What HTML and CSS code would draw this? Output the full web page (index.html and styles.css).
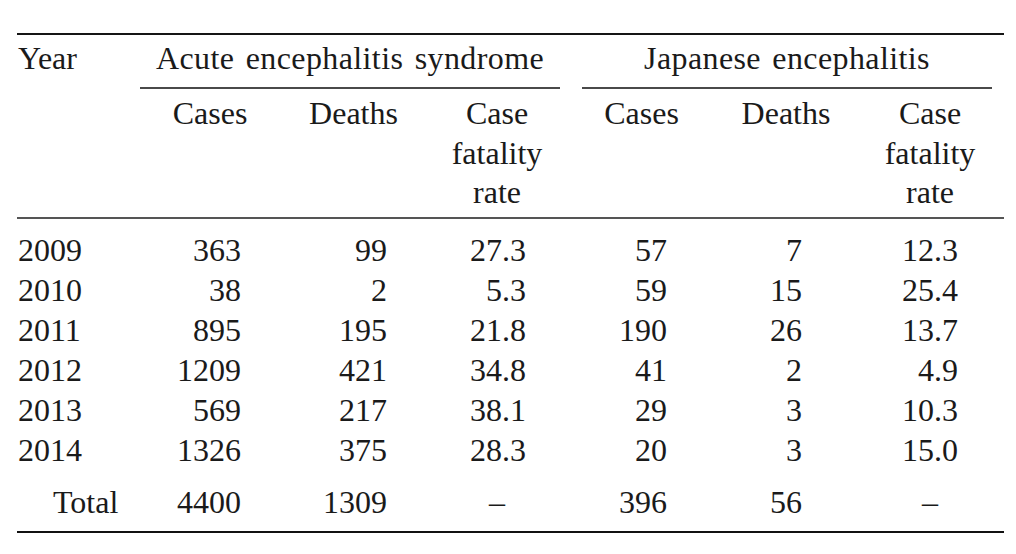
FILE: index.html
```html
<!DOCTYPE html>
<html lang="en">
<head>
<meta charset="utf-8">
<title>Acute encephalitis syndrome and Japanese encephalitis</title>
<link rel="stylesheet" href="styles.css">
</head>
<body>
<table class="je-table">
  <colgroup>
    <col class="c-year">
    <col class="c-cases1">
    <col class="c-deaths1">
    <col class="c-cfr1">
    <col class="c-cases2">
    <col class="c-deaths2">
    <col class="c-cfr2">
  </colgroup>
  <thead>
    <tr class="head-top">
      <th class="year-head" rowspan="2">Year</th>
      <th class="group group-aes" colspan="3"><div class="group-label">Acute encephalitis syndrome</div></th>
      <th class="group group-je" colspan="3"><div class="group-label">Japanese encephalitis</div></th>
    </tr>
    <tr class="head-sub">
      <th>Cases</th>
      <th>Deaths</th>
      <th>Case<br>fatality<br>rate</th>
      <th>Cases</th>
      <th>Deaths</th>
      <th>Case<br>fatality<br>rate</th>
    </tr>
  </thead>
  <tbody>
    <tr><td class="yr">2009</td><td class="n1">363</td><td class="n2">99</td><td class="n3">27.3</td><td class="n4">57</td><td class="n5">7</td><td class="n6">12.3</td></tr>
    <tr><td class="yr">2010</td><td class="n1">38</td><td class="n2">2</td><td class="n3">5.3</td><td class="n4">59</td><td class="n5">15</td><td class="n6">25.4</td></tr>
    <tr><td class="yr">2011</td><td class="n1">895</td><td class="n2">195</td><td class="n3">21.8</td><td class="n4">190</td><td class="n5">26</td><td class="n6">13.7</td></tr>
    <tr><td class="yr">2012</td><td class="n1">1209</td><td class="n2">421</td><td class="n3">34.8</td><td class="n4">41</td><td class="n5">2</td><td class="n6">4.9</td></tr>
    <tr><td class="yr">2013</td><td class="n1">569</td><td class="n2">217</td><td class="n3">38.1</td><td class="n4">29</td><td class="n5">3</td><td class="n6">10.3</td></tr>
    <tr><td class="yr">2014</td><td class="n1">1326</td><td class="n2">375</td><td class="n3">28.3</td><td class="n4">20</td><td class="n5">3</td><td class="n6">15.0</td></tr>
    <tr class="total-row"><td class="yr total-label">Total</td><td class="n1">4400</td><td class="n2">1309</td><td class="dash">–</td><td class="n4">396</td><td class="n5">56</td><td class="dash">–</td></tr>
  </tbody>
</table>
</body>
</html>
```

FILE: styles.css
```css
html, body {
  margin: 0;
  padding: 0;
  background: #ffffff;
}

body {
  padding: 33px 0 0 17px;
}

.je-table {
  border-collapse: separate;
  border-spacing: 0;
  table-layout: fixed;
  width: 987px;
  font-family: "Liberation Serif", "Times New Roman", serif;
  font-size: 32px;
  line-height: 40px;
  color: #1a1a1a;
}

.c-year { width: 123px; }
.c-cases1 { width: 140px; }
.c-deaths1 { width: 147px; }
.c-cfr1 { width: 140px; }
.c-cases2 { width: 149px; }
.c-deaths2 { width: 140px; }
.c-cfr2 { width: 148px; }

.je-table th,
.je-table td {
  padding: 0;
  font-weight: normal;
  white-space: nowrap;
}

.je-table .head-top th {
  border-top: 2px solid #151515;
  padding-top: 3px;
  vertical-align: top;
}

.je-table th.year-head {
  text-align: left;
  padding-left: 1px;
  border-bottom: 2px solid #555555;
}

.group {
  text-align: center;
}

.group-label {
  padding-bottom: 9px;
  border-bottom: 2px solid #4a4a4a;
  letter-spacing: 0.4px;
  word-spacing: 3px;
}

.group-aes .group-label {
  margin-right: 7px;
}

.group-je .group-label {
  margin-left: 15px;
  margin-right: 12px;
}

.je-table .head-sub th {
  text-align: center;
  vertical-align: top;
  padding-top: 5px;
  padding-bottom: 4px;
  line-height: 39.5px;
  border-bottom: 2px solid #555555;
}

.je-table td.yr {
  text-align: left;
  padding-left: 1px;
}

.je-table td.n1,
.je-table td.n2,
.je-table td.n3,
.je-table td.n4,
.je-table td.n5,
.je-table td.n6 {
  text-align: right;
}

.je-table td.n1 { padding-right: 39px; }
.je-table td.n2 { padding-right: 40px; }
.je-table td.n3 { padding-right: 41px; }
.je-table td.n4 { padding-right: 49px; }
.je-table td.n5 { padding-right: 54px; }
.je-table td.n6 { padding-right: 46px; }

.je-table td.dash {
  text-align: center;
}

.je-table tbody tr:first-child td {
  padding-top: 11px;
}

.je-table .total-row td {
  padding-top: 12px;
  padding-bottom: 9px;
  border-bottom: 2px solid #111111;
}

.je-table td.total-label {
  padding-left: 36px;
}
```
